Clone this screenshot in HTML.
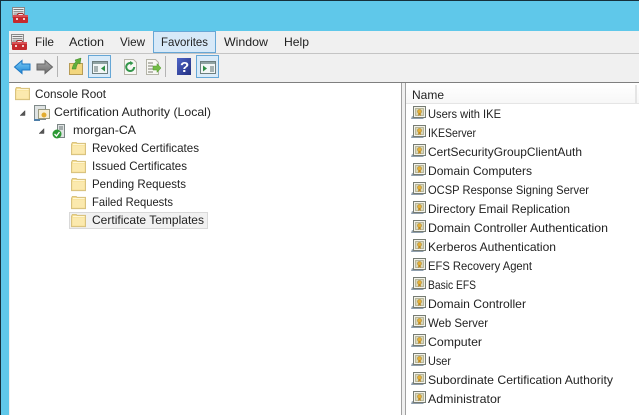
<!DOCTYPE html>
<html><head><meta charset="utf-8"><style>
html,body{margin:0;padding:0;background:#fff;width:639px;height:415px;overflow:hidden}
svg{display:block}
text{font-family:"Liberation Sans",sans-serif;font-size:12px;fill:#222}
</style></head><body>
<svg width="639" height="415" viewBox="0 0 639 415" xmlns="http://www.w3.org/2000/svg">
<defs>
<symbol id="folder" viewBox="0 0 16 16" overflow="visible">
<path d="M.5 3.500V14.500H15.500V2.500H6.500L5.500 1.500H1.500Z" fill="#f5dc8e" stroke="#d6c07f"/>
<rect x="1.500" y="5" width="13" height="8.500" fill="#fbe9ae"/>
<rect x="2" y="3.200" width="12.500" height="1.200" fill="#fff6d4"/>
</symbol>
<symbol id="tpl" viewBox="0 0 16 16" overflow="visible">
<path d="M1 11L0 14H12L14 12H3Z" fill="#8f9fae"/>
<rect x="2.500" y="1.500" width="12" height="11" fill="#f4f3ea" stroke="#767c74"/>
<rect x="4.500" y="3.500" width="8" height="7" fill="#d9d8ba" stroke="#a3a286" stroke-width=".7"/>
<circle cx="8.500" cy="6.500" r="2" fill="#e4b23a" stroke="#a87c24" stroke-width=".5"/>
<path d="M7.500 8L7 11L8.500 10L10 11L9.500 8Z" fill="#c08a20"/>
</symbol>
<symbol id="mmc" viewBox="0 0 16 16" overflow="visible">
<rect x=".5" y=".5" width="12" height="10" fill="#eee" stroke="#8a8a8a"/>
<path d="M1.500 2.500H11.500M1.500 4.800H11.500M1.500 7H7" stroke="#777"/>
<path d="M5 8.500L6.200 6.500H10.800L12 8.500" fill="none" stroke="#a12a2a"/>
<rect x="1" y="8" width="15" height="8" rx="1" fill="#c52a2d"/>
<rect x="1" y="8" width="15" height="2" fill="#d95155"/>
<rect x="4" y="11" width="2" height="2" fill="#f2d0d0"/>
<rect x="11" y="11" width="2" height="2" fill="#f2d0d0"/>
</symbol>
<linearGradient id="hd" x1="0" y1="0" x2="0" y2="1"><stop offset="0" stop-color="#fff"/><stop offset="1" stop-color="#f7f7f7"/></linearGradient>
<linearGradient id="blue" x1="0" y1="0" x2="0" y2="1"><stop offset="0" stop-color="#7ecdf5"/><stop offset="1" stop-color="#1f87d6"/></linearGradient>
<linearGradient id="gray" x1="0" y1="0" x2="0" y2="1"><stop offset="0" stop-color="#a9a9a9"/><stop offset="1" stop-color="#6e6e6e"/></linearGradient>
<linearGradient id="help" x1="0" y1="0" x2="1" y2="1"><stop offset="0" stop-color="#4f66c8"/><stop offset="1" stop-color="#232f80"/></linearGradient>
</defs>

<!-- window frame -->
<rect width="639" height="415" fill="#5fc8ea"/>
<rect x="0" y="0" width="639" height="1" fill="#15303c"/>
<rect x="0" y="0" width="1" height="415" fill="#15303c"/>
<use href="#mmc" x="12" y="7" width="16" height="16"/>

<!-- menu -->
<rect x="9" y="31" width="630" height="22" fill="#f0f0f0"/>
<use href="#mmc" x="11" y="34" width="16" height="16"/>
<rect x="153.500" y="31.500" width="62" height="21" fill="#d7e9f8" stroke="#66a7d6"/>
<text x="35" y="46" textLength="19" lengthAdjust="spacingAndGlyphs">File</text>
<text x="69" y="46" textLength="35" lengthAdjust="spacingAndGlyphs">Action</text>
<text x="120" y="46" textLength="25" lengthAdjust="spacingAndGlyphs">View</text>
<text x="161" y="46" textLength="47" lengthAdjust="spacingAndGlyphs">Favorites</text>
<text x="224" y="46" textLength="44" lengthAdjust="spacingAndGlyphs">Window</text>
<text x="284" y="46" textLength="25" lengthAdjust="spacingAndGlyphs">Help</text>
<rect x="9" y="53" width="630" height="1" fill="#c4c4c4"/>

<!-- toolbar -->
<rect x="9" y="54" width="630" height="29" fill="#f0f0f0"/>
<rect x="9" y="82" width="630" height="1" fill="#7f7f7f"/>
<path d="M14.500 67L22 60.500V64H30V70H22V73.500Z" fill="url(#blue)" stroke="#1c78c4"/>
<path d="M52.500 67L45 60.500V64H37V70H45V73.500Z" fill="url(#gray)" stroke="#666"/>
<rect x="57" y="56" width="1" height="21" fill="#b4b4b4"/>
<path d="M69.500 63.500H82.500V74.500H69.500Z" fill="#f2d67e" stroke="#b79c55"/>
<path d="M72 69C73 65 74 63 76 62L75 60L81 58L80 64L78 63C77 65 76 67 76 69Z" fill="#5fae3b" stroke="#3f8a27" stroke-width=".5"/>
<rect x="88.500" y="55.500" width="22" height="22" fill="#d9ebf9" stroke="#66a7d6"/>
<rect x="92.500" y="61.500" width="15" height="12" fill="#f2f6f6" stroke="#6d7f7f"/>
<rect x="93" y="62" width="14" height="2" fill="#8fa3a3"/>
<path d="M94 66H98V72H94Z" fill="#a6b3b3"/>
<path d="M105 65.500V71.500L101 68.500Z" fill="#2f8f45"/>
<path d="M124.500 59.500H133.500L136.500 62.500V74.500H124.500Z" fill="#f8f8f4" stroke="#b4b4a8"/>
<path d="M134.200 67A4 4 0 1 1 131.500 63.200" fill="none" stroke="#33964b" stroke-width="2"/>
<path d="M130 61L133.500 63L130.500 65.500Z" fill="#33964b"/>
<path d="M146.500 59.500H155.500L158.500 62.500V74.500H146.500Z" fill="#f8f8f4" stroke="#b4b4a8"/>
<path d="M148 63H153M148 66H153M148 69H153M148 72H153" stroke="#7b7b70"/>
<path d="M153 66H157V63.500L161 68L157 72.500V70H153Z" fill="#72bb45" stroke="#4f9a2c" stroke-width=".5"/>
<rect x="165" y="56" width="1" height="21" fill="#b4b4b4"/>
<rect x="177" y="58" width="14" height="17" fill="url(#help)"/>
<text x="180" y="72" style="font-size:15px;font-weight:bold;fill:#fff">?</text>
<rect x="196.500" y="55.500" width="22" height="22" fill="#d9ebf9" stroke="#66a7d6"/>
<rect x="200.500" y="61.500" width="15" height="12" fill="#f2f6f6" stroke="#6d7f7f"/>
<rect x="201" y="62" width="14" height="2" fill="#8fa3a3"/>
<path d="M210 66H214V72H210Z" fill="#a6b3b3"/>
<path d="M203 65.500V71.500L207 68.500Z" fill="#2f8f45"/>

<!-- panes -->
<rect x="9" y="83" width="630" height="332" fill="#f0f0f0"/>
<rect x="10" y="83" width="392" height="332" fill="#fff"/>
<rect x="401" y="83" width="1" height="332" fill="#a0a0a0"/>
<rect x="405" y="83" width="234" height="332" fill="#fff"/>
<rect x="405" y="83" width="1" height="332" fill="#a0a0a0"/>

<!-- tree -->
<use href="#folder" x="15" y="86" width="15" height="15"/>
<text x="35" y="98" textLength="71" lengthAdjust="spacingAndGlyphs">Console Root</text>
<path d="M20 115.500L25 115.500V110.500Z" fill="#555" stroke="#555" stroke-width=".5"/>
<rect x="34.500" y="105.500" width="11" height="14" fill="#dfe3e3" stroke="#7f8a8a"/>
<rect x="38.500" y="109.500" width="11" height="9" fill="#f6efd6" stroke="#9a9a80"/>
<circle cx="44" cy="115" r="2.500" fill="#e2ac2e"/>
<path d="M34 119H40V121H34Z" fill="#4e7ea8"/>
<text x="54" y="116" textLength="157" lengthAdjust="spacingAndGlyphs">Certification Authority (Local)</text>
<path d="M39 133.500L44 133.500V128.500Z" fill="#555" stroke="#555" stroke-width=".5"/>
<rect x="57.500" y="124.500" width="7" height="13" fill="#dfe3e3" stroke="#7b8585"/>
<path d="M59 127H63M59 129H63" stroke="#6a7575"/>
<circle cx="57" cy="134" r="4.500" fill="#2c9a34"/>
<path d="M54.500 134L56.500 136L59.500 132" fill="none" stroke="#fff" stroke-width="1.300"/>
<text x="73" y="134" textLength="63" lengthAdjust="spacingAndGlyphs">morgan-CA</text>
<rect x="69.500" y="212.500" width="138" height="16" fill="#f1f1f1" stroke="#d9d9d9"/>
<use href="#folder" x="71" y="141" width="15" height="15"/>
<use href="#folder" x="71" y="159" width="15" height="15"/>
<use href="#folder" x="71" y="177" width="15" height="15"/>
<use href="#folder" x="71" y="195" width="15" height="15"/>
<use href="#folder" x="71" y="213" width="15" height="15"/>
<text x="92" y="152" textLength="107" lengthAdjust="spacingAndGlyphs">Revoked Certificates</text>
<text x="92" y="170" textLength="95" lengthAdjust="spacingAndGlyphs">Issued Certificates</text>
<text x="92" y="188" textLength="94" lengthAdjust="spacingAndGlyphs">Pending Requests</text>
<text x="92" y="206" textLength="81" lengthAdjust="spacingAndGlyphs">Failed Requests</text>
<text x="92" y="224" textLength="112" lengthAdjust="spacingAndGlyphs">Certificate Templates</text>

<!-- list header -->
<rect x="406" y="84" width="233" height="19" fill="url(#hd)"/>
<rect x="406" y="103" width="233" height="1" fill="#e5e5e5"/>
<rect x="635" y="85" width="2" height="18" fill="#e5e5e5"/>
<text x="412" y="99" textLength="32" lengthAdjust="spacingAndGlyphs">Name</text>

<!-- list -->
<use href="#tpl" x="411" y="105" width="16" height="16"/>
<use href="#tpl" x="411" y="124" width="16" height="16"/>
<use href="#tpl" x="411" y="143" width="16" height="16"/>
<use href="#tpl" x="411" y="162" width="16" height="16"/>
<use href="#tpl" x="411" y="181" width="16" height="16"/>
<use href="#tpl" x="411" y="200" width="16" height="16"/>
<use href="#tpl" x="411" y="219" width="16" height="16"/>
<use href="#tpl" x="411" y="238" width="16" height="16"/>
<use href="#tpl" x="411" y="257" width="16" height="16"/>
<use href="#tpl" x="411" y="276" width="16" height="16"/>
<use href="#tpl" x="411" y="295" width="16" height="16"/>
<use href="#tpl" x="411" y="314" width="16" height="16"/>
<use href="#tpl" x="411" y="333" width="16" height="16"/>
<use href="#tpl" x="411" y="352" width="16" height="16"/>
<use href="#tpl" x="411" y="371" width="16" height="16"/>
<use href="#tpl" x="411" y="390" width="16" height="16"/>
<text x="428" y="118" textLength="73" lengthAdjust="spacingAndGlyphs">Users with IKE</text>
<text x="428" y="137" textLength="48" lengthAdjust="spacingAndGlyphs">IKEServer</text>
<text x="428" y="156" textLength="154" lengthAdjust="spacingAndGlyphs">CertSecurityGroupClientAuth</text>
<text x="428" y="175" textLength="104" lengthAdjust="spacingAndGlyphs">Domain Computers</text>
<text x="428" y="194" textLength="161" lengthAdjust="spacingAndGlyphs">OCSP Response Signing Server</text>
<text x="428" y="213" textLength="142" lengthAdjust="spacingAndGlyphs">Directory Email Replication</text>
<text x="428" y="232" textLength="180" lengthAdjust="spacingAndGlyphs">Domain Controller Authentication</text>
<text x="428" y="251" textLength="128" lengthAdjust="spacingAndGlyphs">Kerberos Authentication</text>
<text x="428" y="270" textLength="104" lengthAdjust="spacingAndGlyphs">EFS Recovery Agent</text>
<text x="428" y="289" textLength="48" lengthAdjust="spacingAndGlyphs">Basic EFS</text>
<text x="428" y="308" textLength="98" lengthAdjust="spacingAndGlyphs">Domain Controller</text>
<text x="428" y="327" textLength="60" lengthAdjust="spacingAndGlyphs">Web Server</text>
<text x="428" y="346" textLength="54" lengthAdjust="spacingAndGlyphs">Computer</text>
<text x="428" y="365" textLength="23" lengthAdjust="spacingAndGlyphs">User</text>
<text x="428" y="384" textLength="185" lengthAdjust="spacingAndGlyphs">Subordinate Certification Authority</text>
<text x="428" y="403" textLength="73" lengthAdjust="spacingAndGlyphs">Administrator</text>
</svg>
</body></html>
